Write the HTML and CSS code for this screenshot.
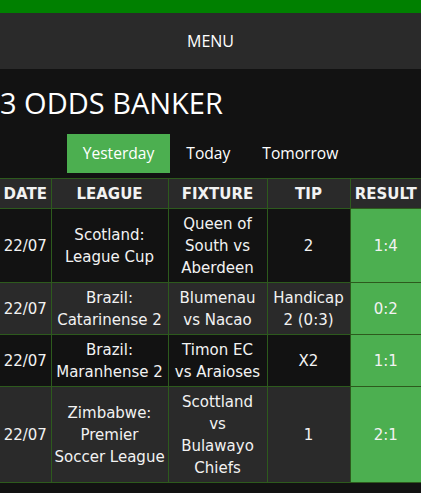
FILE: index.html
```html
<!DOCTYPE html>
<html>
<head>
<meta charset="utf-8">
<link rel="stylesheet" href="styles.css">
</head>
<body>
<div class="topbar"></div>
<nav class="menu">MENU</nav>
<h1 class="title">3 ODDS BANKER</h1>
<div class="tabs">
  <a class="tab active">Yesterday</a>
  <a class="tab">Today</a>
  <a class="tab">Tomorrow</a>
</div>
<table class="tips">
  <colgroup>
    <col class="c-date"><col class="c-league"><col class="c-fixture"><col class="c-tip"><col class="c-result">
  </colgroup>
  <thead>
    <tr><th>DATE</th><th>LEAGUE</th><th>FIXTURE</th><th>TIP</th><th>RESULT</th></tr>
  </thead>
  <tbody>
    <tr class="odd"><td>22/07</td><td>Scotland: League Cup</td><td>Queen of South vs Aberdeen</td><td>2</td><td class="win">1:4</td></tr>
    <tr class="even"><td>22/07</td><td>Brazil: Catarinense 2</td><td>Blumenau vs&nbsp;Nacao</td><td>Handicap 2 (0:3)</td><td class="win">0:2</td></tr>
    <tr class="odd"><td>22/07</td><td>Brazil: Maranhense 2</td><td>Timon EC vs&nbsp;Araioses</td><td>X2</td><td class="win">1:1</td></tr>
    <tr class="even"><td>22/07</td><td>Zimbabwe: Premier Soccer&nbsp;League</td><td>Scottland vs Bulawayo Chiefs</td><td>1</td><td class="win">2:1</td></tr>
  </tbody>
</table>
</body>
</html>
```

FILE: styles.css
```css
html, body {
  margin: 0;
  padding: 0;
  background: #121212;
  color: #fff;
  font-family: "Open Sans", "Noto Sans", sans-serif;
}
.topbar {
  height: 13px;
  background: #008000;
}
.menu {
  height: 56px;
  line-height: 56px;
  background: #2a2a2a;
  text-align: center;
  font-size: 16px;
  color: #fff;
}
.title {
  margin: 0;
  padding: 16px 0 0 0;
  height: 65px;
  box-sizing: border-box;
  font-size: 29px;
  font-weight: 400;
  line-height: 36px;
  color: #fff;
}
.tabs {
  display: flex;
  justify-content: center;
  margin-bottom: 5px;
}
.tab {
  display: block;
  padding: 0 16px;
  height: 39px;
  line-height: 39px;
  font-size: 15.6px;
  color: #fff;
}
.tab.active {
  background: #4caf50;
}
.tips {
  border-collapse: collapse;
  table-layout: fixed;
  width: 421px;
  font-family: "DejaVu Sans", Verdana, sans-serif;
  font-size: 15px;
  line-height: 22px;
}
.c-date { width: 51px; }
.c-league { width: 117px; }
.c-fixture { width: 99px; }
.c-tip { width: 83px; }
.c-result { width: 71px; }
.tips th, .tips td {
  border: 1px solid #2d5a1d;
  padding: 3.5px 3px;
  text-align: center;
  vertical-align: middle;
  color: #f2f2f2;
  overflow: visible;
}
.tips th {
  background: #2a2a2a;
  font-weight: 700;
}
.tips tr.odd td { background: #121212; }
.tips tr.even td { background: #2a2a2a; }
.tips tr td.win { background: #4caf50; }
.tips th:first-child, .tips td:first-child { border-left: none; }
.tips th:last-child, .tips td:last-child { border-right: none; }
```
